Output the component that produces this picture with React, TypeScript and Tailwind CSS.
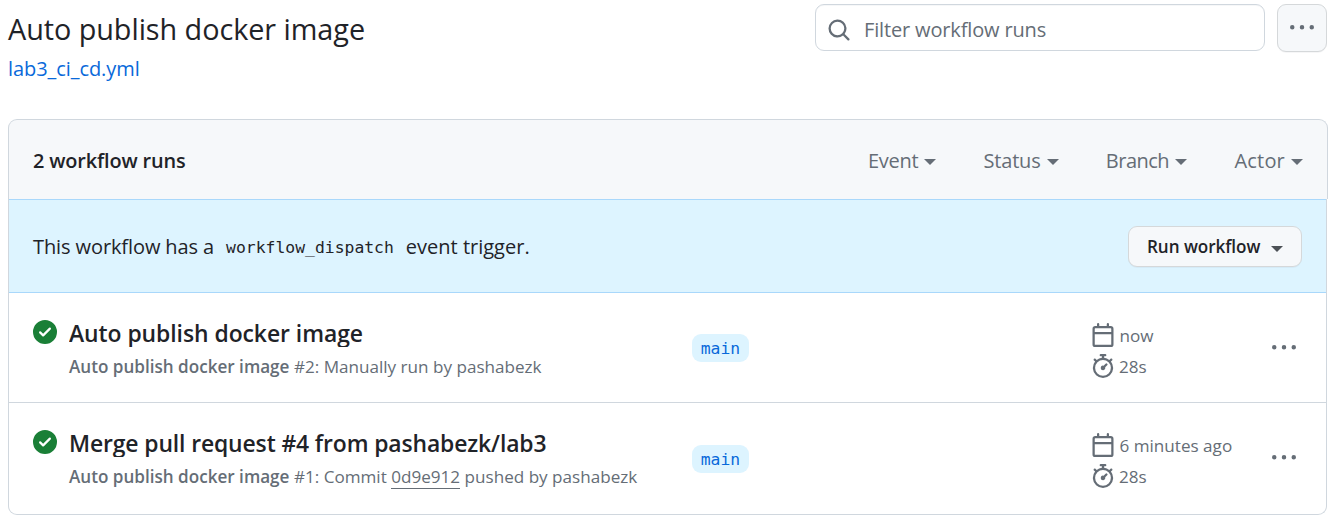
import type { ReactNode } from 'react';

const icons = {
  search:
    'M10.68 11.74a6 6 0 0 1-7.922-8.982 6 6 0 0 1 8.982 7.922l3.04 3.04a.749.749 0 0 1-.326 1.275.749.749 0 0 1-.734-.215ZM11.5 7a4.499 4.499 0 1 0-8.997 0A4.499 4.499 0 0 0 11.5 7Z',
  kebab:
    'M8 9a1.5 1.5 0 1 0 0-3 1.5 1.5 0 0 0 0 3ZM1.5 9a1.5 1.5 0 1 0 0-3 1.5 1.5 0 0 0 0 3Zm13 0a1.5 1.5 0 1 0 0-3 1.5 1.5 0 0 0 0 3Z',
  check:
    'M8 16A8 8 0 1 1 8 0a8 8 0 0 1 0 16Zm3.78-9.72a.751.751 0 0 0-.018-1.042.751.751 0 0 0-1.042-.018L6.75 9.19 5.28 7.72a.751.751 0 0 0-1.042.018.751.751 0 0 0-.018 1.042l2 2a.75.75 0 0 0 1.06 0Z',
  calendar:
    'M4.75 0a.75.75 0 0 1 .75.75V2h5V.75a.75.75 0 0 1 1.5 0V2h1.25c.966 0 1.75.784 1.75 1.75v10.5A1.75 1.75 0 0 1 13.25 16H2.75A1.75 1.75 0 0 1 1 14.25V3.75C1 2.784 1.784 2 2.75 2H4V.75A.75.75 0 0 1 4.75 0ZM2.5 7.5v6.75c0 .138.112.25.25.25h10.5a.25.25 0 0 0 .25-.25V7.5Zm10.75-4H2.75a.25.25 0 0 0-.25.25V6h11V3.75a.25.25 0 0 0-.25-.25Z',
  stopwatch:
    'M5.75.75A.75.75 0 0 1 6.5 0h3a.75.75 0 0 1 0 1.5h-.75v1l-.001.041a6.724 6.724 0 0 1 3.464 1.435l.007-.006.75-.75a.749.749 0 0 1 1.275.326.749.749 0 0 1-.215.734l-.75.75-.006.007a6.75 6.75 0 1 1-10.548 0L2.72 5.03l-.75-.75a.751.751 0 0 1 .018-1.042.751.751 0 0 1 1.042-.018l.75.75.007.006A6.72 6.72 0 0 1 7.25 2.541V1.5H6.5a.75.75 0 0 1-.75-.75ZM8 14.5a5.25 5.25 0 1 0-.001-10.501A5.25 5.25 0 0 0 8 14.5Zm.389-6.7 1.33-1.33a.75.75 0 1 1 1.061 1.06L9.45 8.861A1.503 1.503 0 0 1 8 10.75a1.499 1.499 0 1 1 .389-2.95Z',
};

function Icon({ name, className = '' }: { name: keyof typeof icons; className?: string }) {
  return (
    <svg viewBox="0 0 16 16" className={`size-6 shrink-0 fill-current ${className}`} aria-hidden="true">
      <path d={icons[name]} />
    </svg>
  );
}

function Caret({ className = '' }: { className?: string }) {
  return (
    <span
      className={`inline-block h-0 w-0 border-x-6 border-t-6 border-x-transparent border-t-current ${className}`}
    />
  );
}

function Filter({ label, className = '' }: { label: string; className?: string }) {
  return (
    <button className="flex items-center text-[20px] leading-[30px] text-[#656d76]">
      <span className={className}>{label}</span>
      <Caret className="mt-[3px] ml-1.5" />
    </button>
  );
}

interface RunProps {
  title: string;
  titleClass: string;
  detail: ReactNode;
  age: string;
  className: string;
  branchClass: string;
}

function Run({ title, titleClass, detail, age, className, branchClass }: RunProps) {
  return (
    <div className={`flex items-start pl-6 ${className}`}>
      <Icon name="check" className="mt-[27px] text-[#1a7f37]" />
      <div className="ml-3 w-[623px] pt-[25px]">
        <div
          className={`h-[29px] overflow-hidden text-[22.9px] leading-[32px] font-semibold whitespace-nowrap text-[#1f2328] ${titleClass}`}
        >
          {title}
        </div>
        <div className="mt-1.5 text-[17.1px] leading-[27px] whitespace-nowrap text-[#656d76]">
          <span className="font-semibold">Auto publish docker image</span> {detail}
        </div>
      </div>
      <div className={`w-[399px] ${branchClass}`}>
        <span className="flex h-7 w-[57px] items-center justify-center rounded-[9px] bg-[#ddf4ff] pt-0.5 font-['DejaVu_Sans_Mono',monospace] text-[16.4px] text-[#0969da]">
          main
        </span>
      </div>
      <div className="w-[181px] pt-[30px] text-[17.1px] text-[#656d76]">
        <div className="flex h-6 items-center">
          <Icon name="calendar" />
          <span className="mt-0.5 ml-[4.5px] leading-6 whitespace-nowrap">{age}</span>
        </div>
        <div className="mt-[7px] flex h-6 items-center">
          <Icon name="stopwatch" />
          <span className="mt-0.5 ml-1 leading-6">28s</span>
        </div>
      </div>
      <button className="mt-[43px] text-[#656d76]" aria-label="Show options">
        <Icon name="kebab" />
      </button>
    </div>
  );
}

export default function App() {
  return (
    <div className="h-[519px] w-[1333px] overflow-hidden bg-white font-['Open_Sans',sans-serif] text-[#1f2328]">
      <header className="flex h-[119px] items-start pr-1.5 pl-2">
        <div className="pt-[7px]">
          <h1 className="text-[28.8px] leading-[44px] tracking-[-0.05px]">Auto publish docker image</h1>
          <a className="mt-[3px] block text-[20px] leading-[30px] tracking-[-0.07px] text-[#0969da]">lab3_ci_cd.yml</a>
        </div>
        <div className="mt-1 ml-auto flex h-[47px] w-[450px] items-center rounded-[9px] border border-[#d0d7de] pl-[11px] text-[#656d76] shadow-[inset_0_1px_0_rgba(208,215,222,0.2)]">
          <Icon name="search" className="mt-[5px]" />
          <span className="mt-1 ml-[13px] text-[20px] leading-[30px] tracking-[-0.15px]">Filter workflow runs</span>
        </div>
        <button
          className="mt-1 ml-3 flex h-12 w-[50px] items-center justify-center rounded-[9px] border border-[#d5d8da] bg-[#f6f8fa] text-[#656d76] shadow-[0_1px_0_rgba(31,35,40,0.04)]"
          aria-label="Show options"
        >
          <Icon name="kebab" />
        </button>
      </header>

      <main className="box-content w-[1320px] pl-2">
        <div className="flex h-20 items-center rounded-t-[9px] border-x border-t border-[#d0d7de] bg-[#f6f8fa] pr-6 pl-6">
          <h2 className="mt-0.5 text-[19.9px] leading-[30px] font-semibold tracking-[-0.15px]">2 workflow runs</h2>
          <div className="mt-0.5 ml-auto flex gap-[47.3px]">
            <Filter label="Event" className="tracking-[-0.3px]" />
            <Filter label="Status" className="tracking-[-0.2px]" />
            <Filter label="Branch" className="tracking-[-0.5px]" />
            <Filter label="Actor" className="tracking-[0.2px]" />
          </div>
        </div>

        <div className="h-[316px] w-[1319px] overflow-hidden rounded-b-[9px] border-x border-b border-[#d0d7de]">
          <div className="flex h-[94px] items-center border-y border-[#a9d8fb] bg-[#ddf4ff] pr-6 pl-6">
            <p className="mt-0.5 flex text-[20px] leading-[30px] whitespace-nowrap">
              <span className="tracking-[-0.1px]">This workflow has a</span>
              <code className="mt-px mr-3 ml-3 font-['DejaVu_Sans_Mono',monospace] text-[16.4px]">
                workflow_dispatch
              </code>
              event trigger.
            </p>
            <button className="mt-px ml-auto flex h-[41px] w-[174px] items-center rounded-[9px] border border-[#d5d8da] bg-[#f6f8fa] pt-px pl-[18px] text-[17.1px] font-semibold tracking-[-0.05px] shadow-[0_1px_0_rgba(31,35,40,0.04)]">
              Run workflow
              <Caret className="mt-[3px] ml-[11px] text-[#4c5156]" />
            </button>
          </div>
          <Run
            className="h-[110px] border-b border-[#d0d7de]"
            title="Auto publish docker image"
            titleClass="tracking-[-0.05px]"
            branchClass="pt-[41px]"
            detail="#2: Manually run by pashabezk"
            age="now"
          />
          <Run
            className="h-[111px]"
            title="Merge pull request #4 from pashabezk/lab3"
            titleClass="tracking-[-0.12px]"
            branchClass="pt-[42px]"
            detail={
              <>
                #1: Commit <span className="inline-block h-[26px] border-b border-[#656d76]">0d9e912</span> pushed by
                pashabezk
              </>
            }
            age="6 minutes ago"
          />
        </div>
      </main>
    </div>
  );
}
